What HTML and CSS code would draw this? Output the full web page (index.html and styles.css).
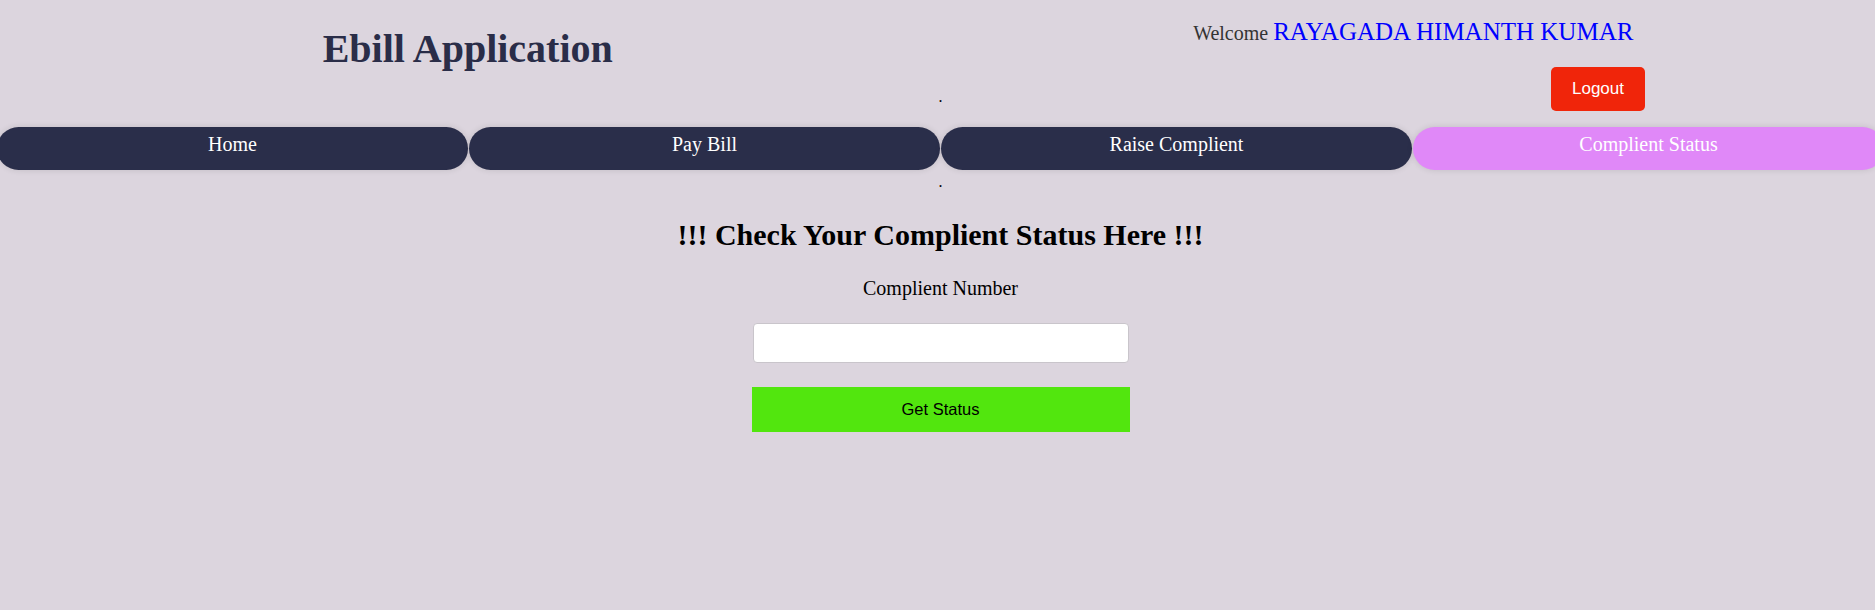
FILE: index.html
```html
<!DOCTYPE html>
<html lang="en">
<head>
<meta charset="utf-8">
<title>Ebill Application</title>
<link rel="stylesheet" href="styles.css">
</head>
<body>
<header class="top">
  <div class="brand"><h1 class="brand-title">Ebill Application</h1></div>
  <div class="user">
    <p class="welcome">Welcome <span class="user-name">RAYAGADA HIMANTH KUMAR</span></p>
    <div class="logout-row"><button class="logout" type="button">Logout</button></div>
  </div>
  <div class="dot dot-header">.</div>
</header>
<div class="menu-wrap">
  <nav class="menu">
    <a class="pill" href="#">Home</a>
    <a class="pill" href="#">Pay Bill</a>
    <a class="pill" href="#">Raise Complient</a>
    <a class="pill pill-active" href="#">Complient Status</a>
  </nav>
</div>
<div class="dot dot-below">.</div>
<main class="status">
  <h2 class="status-title">!!! Check Your Complient Status Here !!!</h2>
  <label class="status-label" for="cno">Complient Number</label>
  <input class="status-input" id="cno" type="text">
  <button class="status-btn" type="button">Get Status</button>
</main>
</body>
</html>
```
FILE: styles.css
```css
html, body {
  margin: 0;
  padding: 0;
  background: #dcd5de;
  font-family: "Liberation Serif", "Times New Roman", serif;
  color: #000;
}

.top {
  display: grid;
  grid-template-columns: 1fr 1fr;
  height: 110px;
}

.brand {
  grid-row: 1;
  grid-column: 1;
  text-align: center;
  padding-top: 26px;
  padding-right: 2px;
}

.brand-title {
  margin: 0;
  font-size: 40px;
  line-height: 46px;
  font-weight: bold;
  color: #2a2d48;
}

.dot {
  font-size: 16px;
  line-height: 18px;
  text-align: center;
}

.dot-header {
  grid-row: 1;
  grid-column: 1 / 3;
  align-self: end;
  margin-bottom: 5px;
  padding-left: 6px;
}

.user {
  grid-row: 1;
  grid-column: 2;
  display: flex;
  flex-direction: column;
  padding-top: 18px;
}

.welcome {
  margin: 0;
  text-align: center;
  padding-left: 14px;
  font-size: 20px;
  line-height: 28px;
  color: #333;
}

.user-name {
  font-size: 25px;
  color: #0000ff;
}

.logout-row {
  display: flex;
  justify-content: flex-end;
  padding-right: 230px;
  margin-top: 20px;
}

.logout {
  width: 94px;
  height: 44px;
  border: none;
  border-radius: 5px;
  background: #f0250a;
  color: #fff;
  font-family: "Liberation Sans", Arial, sans-serif;
  font-size: 17px;
}

.menu-wrap {
  overflow: hidden;
  margin-top: 11px;
  padding: 6px 0;
  margin-bottom: -6px;
}

.menu {
  display: flex;
  gap: 1px;
  margin-left: -3px;
}

.pill {
  flex: 0 0 471px;
  height: 43px;
  box-sizing: border-box;
  padding-top: 6px;
  border-radius: 22px;
  background: #2a2e4a;
  color: #fff;
  text-decoration: none;
  text-align: center;
  font-size: 20px;
  line-height: 23px;
  box-shadow: 0 0 6px rgba(0, 0, 0, 0.12);
}

.pill-active {
  background: #e088f8;
}

.dot-below {
  margin-top: 3px;
  padding-left: 6px;
}

.status {
  display: flex;
  flex-direction: column;
  align-items: center;
  padding-left: 6px;
}

.status-title {
  margin: 26px 0 0;
  font-size: 30px;
  line-height: 35px;
  font-weight: bold;
}

.status-label {
  margin-top: 25px;
  font-size: 20px;
  line-height: 23px;
}

.status-input {
  margin-top: 23px;
  width: 376px;
  height: 40px;
  box-sizing: border-box;
  border: 1px solid #c9c5cb;
  border-radius: 4px;
  background: #fff;
}

.status-btn {
  margin-top: 24px;
  width: 378px;
  height: 45px;
  border: none;
  background: #52e60e;
  color: #000;
  font-family: "Liberation Sans", Arial, sans-serif;
  font-size: 16.5px;
}
```
